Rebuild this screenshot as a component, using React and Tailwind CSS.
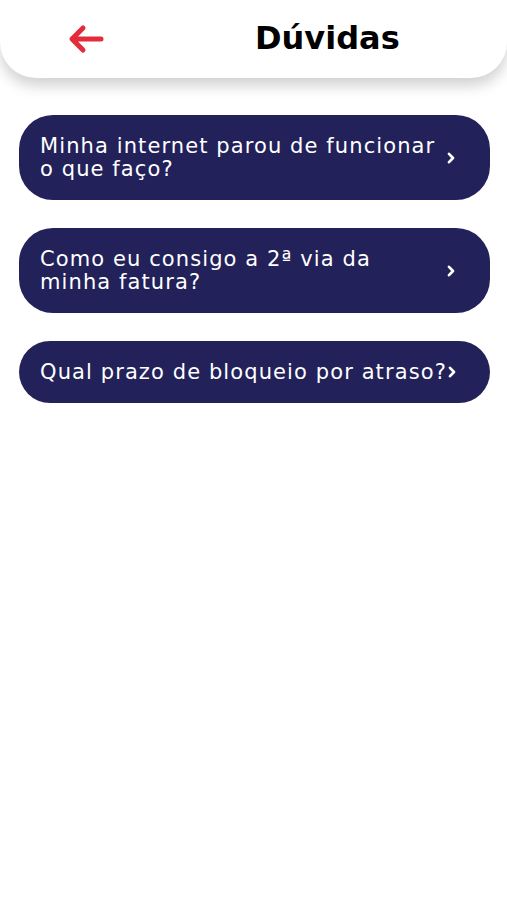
import React from "react";

const items = [
  ["Minha internet parou de funcionar", "o que faço?"],
  ["Como eu consigo a 2ª via da", "minha fatura?"],
  ["Qual prazo de bloqueio por atraso?"],
];

function Chevron() {
  return (
    <svg width="10" height="12" viewBox="0 0 10 12" className="shrink-0">
      <path d="M3 1.8 L7 6 L3 10.2" fill="none" stroke="white" strokeWidth="2.6" strokeLinecap="round" strokeLinejoin="round" />
    </svg>
  );
}

export default function App() {
  return (
    <div className="min-h-[900px] w-[507px] bg-white" style={{ fontFamily: "'DejaVu Sans', Verdana, sans-serif" }}>
      <header className="relative h-[78px] rounded-b-[36px] bg-white shadow-[0_8px_14px_rgba(0,0,0,0.18)] flex items-center">
        <div className="w-[255px] flex items-center pl-[68px]">
          <svg width="36" height="30" viewBox="0 0 36 30">
            <path d="M33 15 H5 M15 4 L4 15 L15 26" fill="none" stroke="#e42b3b" strokeWidth="5" strokeLinecap="round" strokeLinejoin="round" />
          </svg>
        </div>
        <h1 className="text-[32px] font-bold text-black leading-none -mt-[3px]">Dúvidas</h1>
      </header>
      <main className="flex flex-col gap-[28px] pl-[19px] pr-[17px] pt-[37px]">
        {items.map((lines, i) => (
          <button
            key={i}
            className={`flex items-center justify-between w-full rounded-[34px] bg-[#22215a] pl-[21px] pr-[34px] text-left text-white ${i === 2 ? "h-[62px]" : "h-[85px]"}`}
          >
            <span className="flex flex-col text-[21px] leading-[23px] tracking-[1.1px] whitespace-nowrap">
              {lines.map((l, j) => (
                <span key={j}>{l}</span>
              ))}
            </span>
            <Chevron />
          </button>
        ))}
      </main>
    </div>
  );
}
